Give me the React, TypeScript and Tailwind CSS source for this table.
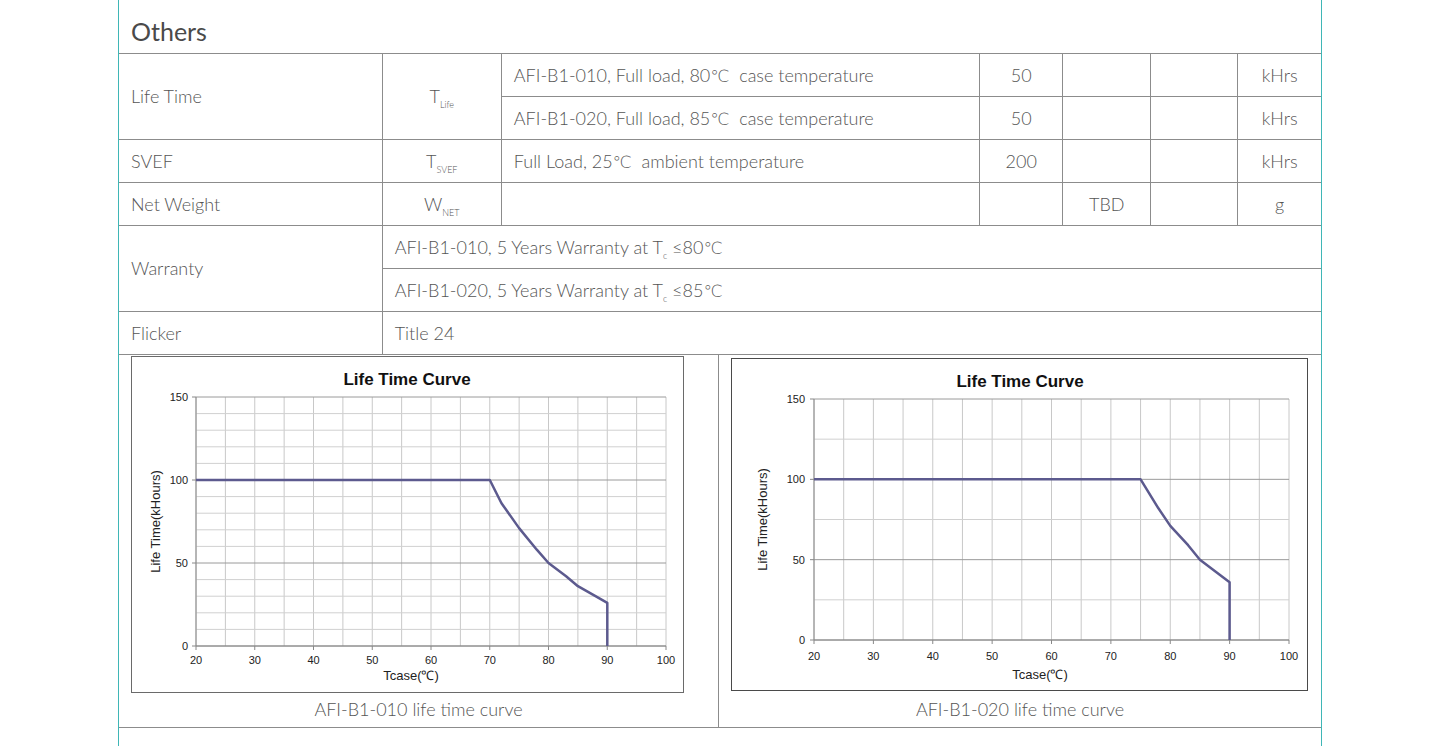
const font = "font-['Lato','Liberation_Sans',sans-serif]";

type Pt = [number, number];

interface ChartProps {
  w: number;
  h: number;
  x0: number;
  x1: number;
  y0: number;
  y1: number;
  hStep: number;
  points: Pt[];
  titleX: number;
  titleY: number;
  labelRight: number;
  xLabelY: number;
  axisTitleX: number;
  axisTitleY: number;
  yTitleX: number;
}

const LifeChart = ({
  w,
  h,
  x0,
  x1,
  y0,
  y1,
  hStep,
  points,
  titleX,
  titleY,
  labelRight,
  xLabelY,
  axisTitleX,
  axisTitleY,
  yTitleX,
}: ChartProps) => {
  const sx = (t: number) => x0 + ((t - 20) / 80) * (x1 - x0);
  const sy = (v: number) => y1 - (v / 150) * (y1 - y0);
  const vLines = Array.from({ length: 17 }, (_, i) => 20 + i * 5);
  const hLines = Array.from({ length: 150 / hStep + 1 }, (_, i) => i * hStep);
  const d = points.map(([t, v], i) => `${i ? "L" : "M"}${sx(t).toFixed(1)} ${sy(v).toFixed(1)}`).join(" ");
  const my = (y0 + y1) / 2;
  return (
    <svg width={w} height={h} className="block font-['Liberation_Sans',Arial,sans-serif]">
      {vLines.map((t) => (
        <line key={t} x1={sx(t)} x2={sx(t)} y1={y0} y2={y1} stroke="#c8c8c8" strokeWidth="1" />
      ))}
      {hLines.map((v) => (
        <line key={v} x1={x0} x2={x1} y1={sy(v)} y2={sy(v)} stroke={v % 50 === 0 ? "#9a9a9a" : "#d0d0d0"} strokeWidth="1" />
      ))}
      <line x1={x0} x2={x0} y1={y0} y2={y1} stroke="#888" />
      <line x1={x0} x2={x1} y1={y1} y2={y1} stroke="#888" />
      {[0, 50, 100, 150].map((v) => (
        <g key={v}>
          <line x1={x0 - 4} x2={x0} y1={sy(v)} y2={sy(v)} stroke="#888" />
          <text x={labelRight} y={sy(v) + 4} textAnchor="end" fontSize="11" fill="#222">
            {v}
          </text>
        </g>
      ))}
      {[20, 30, 40, 50, 60, 70, 80, 90, 100].map((t) => (
        <g key={t}>
          <line x1={sx(t)} x2={sx(t)} y1={y1} y2={y1 + 4} stroke="#888" />
          <text x={sx(t)} y={xLabelY} textAnchor="middle" fontSize="11" fill="#222">
            {t}
          </text>
        </g>
      ))}
      <path d={d} fill="none" stroke="#5c5a8e" strokeWidth="2.5" strokeLinejoin="round" />
      <text x={titleX} y={titleY} textAnchor="middle" fontSize="17" fontWeight="bold" fill="#111">
        Life Time Curve
      </text>
      <text x={axisTitleX} y={axisTitleY} textAnchor="middle" fontSize="13" fill="#222">
        Tcase(℃)
      </text>
      <text x={yTitleX} y={my} textAnchor="middle" fontSize="13" fill="#222" transform={`rotate(-90 ${yTitleX} ${my})`}>
        Life Time(kHours)
      </text>
    </svg>
  );
};

const cell = "border border-[#8c8c8c] px-3 text-[18px] font-light text-[#555]";

const Sub = ({ base, sub }: { base: string; sub: string }) => (
  <span>
    {base}
    <sub className="text-[9px] align-[-3px]">{sub}</sub>
  </span>
);

// Lato has no ℃ glyph, so give it a thin font that has one
const Deg = () => <span className="font-['DejaVu_Sans',sans-serif] text-[17px] leading-none font-extralight">℃</span>;

export default function App() {
  return (
    <div className={`min-h-[746px] bg-white ${font}`}>
      <div className="ml-[118px] w-[1204px] border-x border-[#3fb6b6] pb-5">
        <div className="flex h-[53px] items-center px-3 pt-2.5 text-[25px] text-[#4a4a4a]">Others</div>
        <table className="w-full table-fixed border-collapse border-y border-[#8c8c8c]">
          <colgroup>
            <col className="w-[263px]" />
            <col className="w-[119px]" />
            <col className="w-[478px]" />
            <col className="w-[83px]" />
            <col className="w-[88px]" />
            <col className="w-[87px]" />
            <col className="w-[83px]" />
          </colgroup>
          <tbody>
            <tr className="h-[43px]">
              <td rowSpan={2} className={`${cell} border-l-0`}>Life Time</td>
              <td rowSpan={2} className={`${cell} text-center`}>
                <Sub base="T" sub="Life" />
              </td>
              <td className={cell}>
                AFI-B1-010, Full load, 80<Deg />&nbsp; case temperature
              </td>
              <td className={`${cell} text-center`}>50</td>
              <td className={cell}></td>
              <td className={cell}></td>
              <td className={`${cell} border-r-0 text-center`}>kHrs</td>
            </tr>
            <tr className="h-[43px]">
              <td className={cell}>
                AFI-B1-020, Full load, 85<Deg />&nbsp; case temperature
              </td>
              <td className={`${cell} text-center`}>50</td>
              <td className={cell}></td>
              <td className={cell}></td>
              <td className={`${cell} border-r-0 text-center`}>kHrs</td>
            </tr>
            <tr className="h-[43px]">
              <td className={`${cell} border-l-0`}>SVEF</td>
              <td className={`${cell} text-center`}>
                <Sub base="T" sub="SVEF" />
              </td>
              <td className={cell}>
                Full Load, 25<Deg />&nbsp; ambient temperature
              </td>
              <td className={`${cell} text-center`}>200</td>
              <td className={cell}></td>
              <td className={cell}></td>
              <td className={`${cell} border-r-0 text-center`}>kHrs</td>
            </tr>
            <tr className="h-[43px]">
              <td className={`${cell} border-l-0`}>Net Weight</td>
              <td className={`${cell} text-center`}>
                <Sub base="W" sub="NET" />
              </td>
              <td className={cell}></td>
              <td className={cell}></td>
              <td className={`${cell} text-center`}>TBD</td>
              <td className={cell}></td>
              <td className={`${cell} border-r-0 text-center`}>g</td>
            </tr>
            <tr className="h-[43px]">
              <td rowSpan={2} className={`${cell} border-l-0`}>Warranty</td>
              <td colSpan={6} className={`${cell} border-r-0`}>
                AFI-B1-010, 5 Years Warranty at <Sub base="T" sub="c" /> ≤80<Deg />
              </td>
            </tr>
            <tr className="h-[43px]">
              <td colSpan={6} className={`${cell} border-r-0`}>
                AFI-B1-020, 5 Years Warranty at <Sub base="T" sub="c" /> ≤85<Deg />
              </td>
            </tr>
            <tr className="h-[43px]">
              <td className={`${cell} border-l-0`}>Flicker</td>
              <td colSpan={6} className={`${cell} border-r-0`}>Title 24</td>
            </tr>
          </tbody>
        </table>
        <div className="grid grid-cols-[600px_1fr] border-b border-[#8c8c8c]">
          <div className="border-r border-[#8c8c8c] pl-3 pt-[1px]">
            <div className="w-[553px] border border-[#6a6a6a]">
              <LifeChart
                w={551}
                h={335}
                x0={64}
                x1={534}
                y0={40}
                y1={289}
                hStep={10}
                points={[
                  [20, 100],
                  [70, 100],
                  [72, 86],
                  [75, 71],
                  [78, 58],
                  [80, 50],
                  [83, 42],
                  [85, 36],
                  [88, 30],
                  [90, 26],
                  [90, 0],
                ]}
                titleX={275}
                titleY={28}
                labelRight={56}
                xLabelY={307}
                axisTitleX={279}
                axisTitleY={323}
                yTitleX={28}
              />
            </div>
            <div className="flex h-[33px] items-center justify-center pr-3 text-[18px] font-light text-[#555]">
              AFI-B1-010 life time curve
            </div>
          </div>
          <div className="pl-3 pt-[3px]">
            <div className="w-[577px] border border-[#4a4a4a]">
              <LifeChart
                w={575}
                h={331}
                x0={82}
                x1={557}
                y0={40}
                y1={281}
                hStep={25}
                points={[
                  [20, 100],
                  [75, 100],
                  [78, 82],
                  [80, 71],
                  [83, 59],
                  [85, 50],
                  [90, 36],
                  [90, 0],
                ]}
                titleX={288}
                titleY={28}
                labelRight={73}
                xLabelY={301}
                axisTitleX={308}
                axisTitleY={320}
                yTitleX={35}
              />
            </div>
            <div className="flex h-[36px] items-center justify-center pr-3 text-[18px] font-light text-[#555]">
              AFI-B1-020 life time curve
            </div>
          </div>
        </div>
      </div>
    </div>
  );
}
